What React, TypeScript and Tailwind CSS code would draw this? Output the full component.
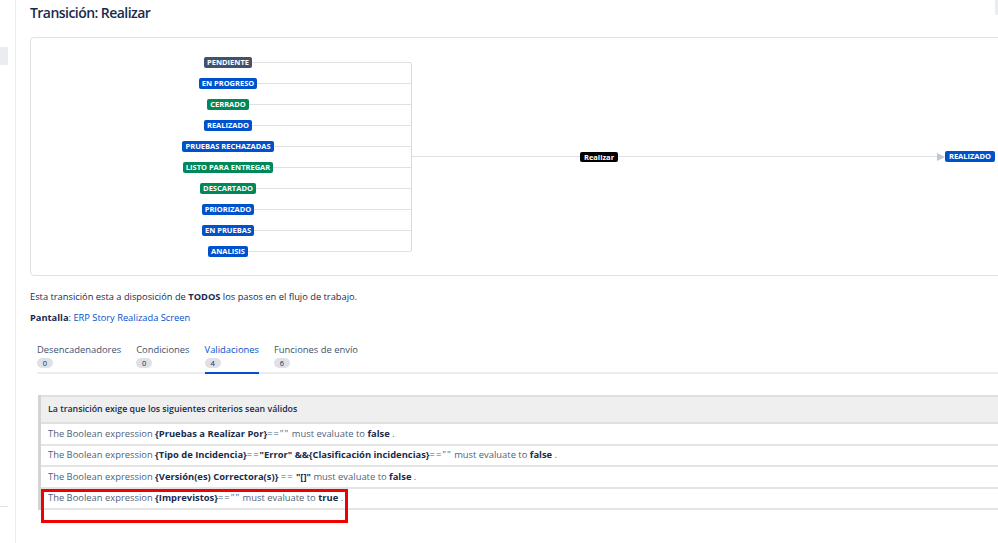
import React from 'react';

type Lozenge = { label: string; color: string };

const sources: Lozenge[] = [
	{ label: 'PENDIENTE', color: 'bg-[#42526e]' },
	{ label: 'EN PROGRESO', color: 'bg-[#0052cc]' },
	{ label: 'CERRADO', color: 'bg-[#00875a]' },
	{ label: 'REALIZADO', color: 'bg-[#0052cc]' },
	{ label: 'PRUEBAS RECHAZADAS', color: 'bg-[#0052cc]' },
	{ label: 'LISTO PARA ENTREGAR', color: 'bg-[#00875a]' },
	{ label: 'DESCARTADO', color: 'bg-[#00875a]' },
	{ label: 'PRIORIZADO', color: 'bg-[#0052cc]' },
	{ label: 'EN PRUEBAS', color: 'bg-[#0052cc]' },
	{ label: 'ANALISIS', color: 'bg-[#0052cc]' },
];

const tabs = [
	{ label: 'Desencadenadores', count: 0 },
	{ label: 'Condiciones', count: 0 },
	{ label: 'Validaciones', count: 4, active: true },
	{ label: 'Funciones de envío', count: 6 },
];

const Status: React.FC<{ item: Lozenge }> = ({ item }) => (
	<span className={`${item.color} text-white text-[7.5px] font-bold leading-[11px] h-[11px] px-[3px] rounded-[2px] whitespace-nowrap`}>
		{item.label}
	</span>
);

const B: React.FC<{ children: React.ReactNode }> = ({ children }) => (
	<span className="font-bold text-[#172b4d]">{children}</span>
);

const Eq: React.FC<{ children: React.ReactNode }> = ({ children }) => (
	<span className="tracking-[1px]">{children}</span>
);

const rows: React.ReactNode[] = [
	<>The Boolean expression <B>{'{Pruebas a Realizar Por}'}</B><Eq>==""</Eq> must evaluate to <B>false</B> .</>,
	<>The Boolean expression <B>{'{Tipo de Incidencia}'}</B><Eq>==</Eq><B>"Error" &&{'{Clasificación incidencias}'}</B><Eq>==""</Eq> must evaluate to <B>false</B> .</>,
	<>The Boolean expression <B>{'{Versión(es) Correctora(s)}'}</B> <Eq>==</Eq> <B>"[]"</B> must evaluate to <B>false</B> .</>,
	<>The Boolean expression <B>{'{Imprevistos}'}</B><Eq>==""</Eq> must evaluate to <B>true</B> .</>,
];

export default function App() {
	return (
		<div className="w-[998px] h-[543px] overflow-hidden bg-white flex text-[#172b4d] font-['Open_Sans',sans-serif]">
			{/* sidebar edge */}
			<div className="w-[16px] shrink-0 border-r border-[#ebecf0] flex flex-col">
				<div className="mt-[47px] w-[8px] h-[18px] bg-[#ebecf0]" />
				<div className="mt-auto mb-[36px] w-[8px] h-px bg-[#dfe1e6]" />
			</div>

			<div className="flex-1 min-w-0 pl-[14px] relative">
				<div className="absolute right-0 top-0 w-[3px] h-[15px] bg-[#ebecf0]" />
				<div className="h-[37px] pt-[4px]">
					<h1 className="text-[14px] leading-[18px] font-semibold tracking-[-0.55px]">Transición: Realizar</h1>
				</div>

				{/* diagram */}
				<div className="w-[1000px] h-[239px] border border-[#dfe1e6] rounded-[4px] flex items-center pl-[14px]">
					<div className="w-[367px] shrink-0 border-r border-[#d5d8de] rounded-r-[3px] flex flex-col">
						{sources.map((s, i) => (
							<div
								key={s.label}
								className={`h-[21px] flex items-center justify-center bg-[linear-gradient(#dfe1e6,#dfe1e6)] bg-no-repeat bg-[length:50%_1px] bg-right ${i === 0 ? '-mt-[10px]' : ''} ${i === sources.length - 1 ? '-mb-[10px]' : ''}`}
							>
								<Status item={s} />
							</div>
						))}
					</div>
					<div className="w-[168px] h-px bg-[#dfe1e6]" />
					<span className="bg-black text-white text-[7.5px] font-bold leading-[10px] h-[10px] w-[38px] text-center rounded-[2px]">Realizar</span>
					<div className="w-[319px] h-px bg-[#dfe1e6]" />
					<svg width="8" height="8" viewBox="0 0 8 8" className="shrink-0">
						<path d="M0 0 L8 4 L0 8 Z" fill="#c1c7d0" />
					</svg>
					<span className="bg-[#0052cc] text-white text-[7.5px] font-bold leading-[11px] h-[11px] w-[50px] text-center rounded-[2px]">REALIZADO</span>
				</div>

				<p className="mt-[14px] text-[9.3px] leading-[14px]">
					Esta transición esta a disposición de <span className="font-bold">TODOS</span> los pasos en el flujo de trabajo.
				</p>
				<p className="mt-[7px] text-[9.3px] leading-[14px]">
					<span className="font-bold">Pantalla</span>: <span className="text-[#0052cc]">ERP Story Realizada Screen</span>
				</p>

				{/* tabs */}
				<div className="mt-[18px] ml-[7px] flex gap-[15px] border-b-2 border-[#ebecf0]">
					{tabs.map((t) => (
						<div
							key={t.label}
							className={`flex flex-col items-start pb-[4px] -mb-[2px] border-b-2 ${t.active ? 'border-[#0052cc]' : 'border-transparent'}`}
						>
							<span className={`text-[9.4px] leading-[14px] ${t.active ? 'text-[#0052cc]' : 'text-[#42526e]'}`}>{t.label}</span>
							<span className="mt-px w-[16px] h-[10px] rounded-full bg-[#dfe1e6] text-[7.5px] leading-[10px] text-center text-[#172b4d]">{t.count}</span>
						</div>
					))}
				</div>

				{/* validators table */}
				<div className="mt-[21px] ml-[8px] w-[1000px] relative border-l-[3px] border-[#d4d4d4]">
					<div className="h-[29px] bg-[#efefef] border-t-2 border-b-2 border-[#e0e0e0] flex items-center pl-[7px] text-[8.8px] font-semibold">
						<span>La transición exige que los siguientes criterios sean válidos</span>
					</div>
					{rows.map((r, i) => (
						<div key={i} className="h-[21.5px] border-b-2 border-[#e4e4e4] flex items-center pl-[7px] text-[9.4px] text-[#505f79] whitespace-nowrap">
							<span>{r}</span>
						</div>
					))}
					<div className="absolute left-[0px] top-[94px] w-[307px] h-[34px] border-[3px] border-[#f00000]" />
				</div>
			</div>
		</div>
	);
}
